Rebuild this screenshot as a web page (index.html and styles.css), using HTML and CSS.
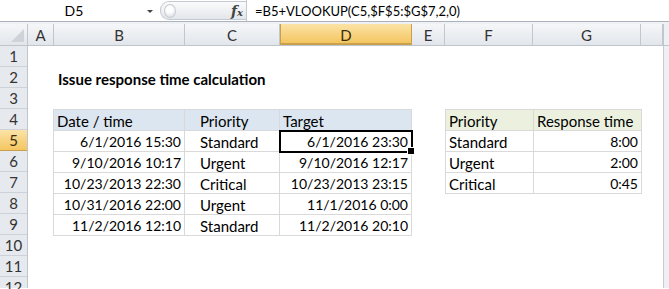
FILE: index.html
```html
<!DOCTYPE html>
<html lang="en">
<head>
    <meta charset="UTF-8">
    <title>Issue response time calculation</title>
    <link rel="stylesheet" href="styles.css">
</head>
<body>
    <div class="formula-bar">
        <div class="name-box">D5</div>
        <div class="name-drop"></div>
        <div class="fx-group">
            <span class="knob"></span>
            <span class="fx">f<i>x</i></span>
        </div>
        <div class="formula">=B5+VLOOKUP(C5,$F$5:$G$7,2,0)</div>
    </div>
    <div class="band"></div>

    <div class="col-heads">
        <div class="corner"></div>
        <div class="col-head w-a">A</div>
        <div class="col-head w-b">B</div>
        <div class="col-head w-c">C</div>
        <div class="col-head w-d selected">D</div>
        <div class="col-head w-e">E</div>
        <div class="col-head w-f">F</div>
        <div class="col-head w-g">G</div>
        <div class="col-head w-h"></div>
        <div class="scroll-cap"></div>
    </div>

    <div class="sheet-body">
        <div class="row-heads">
            <div class="row-head">1</div>
            <div class="row-head">2</div>
            <div class="row-head">3</div>
            <div class="row-head">4</div>
            <div class="row-head selected">5</div>
            <div class="row-head">6</div>
            <div class="row-head">7</div>
            <div class="row-head">8</div>
            <div class="row-head">9</div>
            <div class="row-head">10</div>
            <div class="row-head">11</div>
            <div class="row-head">12</div>
        </div>

        <div class="cells">
            <div class="blank-row"></div>
            <div class="title">Issue response time calculation</div>
            <div class="blank-row"></div>

            <div class="tables">
                <table class="data main">
                    <colgroup>
                        <col class="w-b"><col class="w-c"><col class="w-d">
                    </colgroup>
                    <tr class="head">
                        <td>Date / time</td><td class="indent">Priority</td><td>Target</td>
                    </tr>
                    <tr>
                        <td class="num">6/1/2016 15:30</td><td class="indent">Standard</td><td class="num active">6/1/2016 23:30</td>
                    </tr>
                    <tr>
                        <td class="num">9/10/2016 10:17</td><td class="indent">Urgent</td><td class="num">9/10/2016 12:17</td>
                    </tr>
                    <tr>
                        <td class="num">10/23/2013 22:30</td><td class="indent">Critical</td><td class="num">10/23/2013 23:15</td>
                    </tr>
                    <tr>
                        <td class="num">10/31/2016 22:00</td><td class="indent">Urgent</td><td class="num">11/1/2016 0:00</td>
                    </tr>
                    <tr>
                        <td class="num">11/2/2016 12:10</td><td class="indent">Standard</td><td class="num">11/2/2016 20:10</td>
                    </tr>
                </table>

                <table class="data lookup">
                    <colgroup>
                        <col class="w-f"><col class="w-g">
                    </colgroup>
                    <tr class="head">
                        <td>Priority</td><td>Response time</td>
                    </tr>
                    <tr><td>Standard</td><td class="num">8:00</td></tr>
                    <tr><td>Urgent</td><td class="num">2:00</td></tr>
                    <tr><td>Critical</td><td class="num">0:45</td></tr>
                </table>
            </div>
        </div>

        <div class="scroll"></div>
    </div>
</body>
</html>
```

FILE: styles.css
```css
* {
    margin: 0;
    padding: 0;
    box-sizing: border-box;
}
body {
    width: 669px;
    height: 289px;
    overflow: hidden;
    background: #fff;
    font-family: Lato, "Liberation Sans", sans-serif;
    font-size: 15px;
    color: #000;
}

/* formula bar */
.formula-bar {
    display: flex;
    height: 22px;
    border-bottom: 1px solid #aab2bd;
    background: #fff;
    font-size: 13px;
}
.name-box {
    width: 143px;
    text-align: center;
    line-height: 22px;
    padding-left: 5px;
    font-size: 14px;
}
.name-drop {
    width: 14px;
    position: relative;
}
.name-drop::before {
    content: "";
    position: absolute;
    left: 4px;
    top: 10px;
    border-left: 3px solid transparent;
    border-right: 3px solid transparent;
    border-top: 3px solid #444;
}
.fx-group {
    display: flex;
    align-items: center;
    justify-content: space-between;
    width: 86px;
    margin: 1px 0 1px 3px;
    padding: 0 3px 0 3px;
    border: 1px solid #c3c9d2;
    border-right: none;
    border-radius: 9px 0 0 9px;
    background: linear-gradient(#fbfbfc, #e3e6ea);
}
.knob {
    width: 12px;
    height: 14px;
    border-radius: 50%;
    background: radial-gradient(circle at 45% 35%, #fff 30%, #d2d7de 100%);
    border: 1px solid #c7ccd3;
}
.fx {
    font-family: "DejaVu Serif", "Liberation Serif", serif;
    font-style: italic;
    font-weight: bold;
    font-size: 14px;
    color: #444;
}
.fx i {
    font-size: 10px;
}
.formula {
    flex: 1;
    border-left: 1px solid #c3c9d2;
    line-height: 22px;
    padding-left: 8px;
}
.band {
    height: 2px;
    background: #eef0f3;
}

/* column headers */
.col-heads {
    display: flex;
    height: 22px;
    border-bottom: 1px solid #bfc5cd;
    background: linear-gradient(#f5f6f8, #e2e6eb);
    color: #333;
}
.corner {
    width: 28px;
    border-right: 1px solid #c2c7ce;
    position: relative;
}
.corner::after {
    content: "";
    position: absolute;
    right: 3px;
    bottom: 3px;
    border-left: 13px solid transparent;
    border-bottom: 13px solid #cfd3d9;
}
.col-head {
    border-right: 1px solid #c2c7ce;
    text-align: center;
    line-height: 22px;
}
.col-head.selected {
    background: linear-gradient(#fbe3a6, #f4c661);
    border-left: 1px solid #c9a04c;
    border-right: 1px solid #c9a04c;
    border-bottom: 2px solid #c9a04c;
    color: #3a2c0c;
}
.w-a { width: 26px; }
.w-b { width: 131px; }
.w-c { width: 95px; }
.w-d { width: 132px; }
.w-e { width: 33px; }
.w-f { width: 88px; }
.w-g { width: 108px; }
.w-h { width: 22px; }
.scroll-cap {
    flex: 1;
    background: #eef0f3;
    border-left: 1px solid #c2c7ce;
}

/* sheet body */
.sheet-body {
    display: flex;
    height: 242px;
}
.row-heads {
    width: 28px;
    flex-shrink: 0;
    background: #e6e9ee;
    border-right: 1px solid #bfc5cd;
    color: #333;
}
.row-head {
    height: 21px;
    border-bottom: 1px solid #cdd2d9;
    text-align: center;
    line-height: 21px;
}
.row-head.selected {
    background: linear-gradient(#fbe3a6, #f4c661);
    border-bottom-color: #c9a04c;
    color: #3a2c0c;
}
.cells {
    flex: 1;
}
.blank-row {
    height: 21px;
}
.title {
    height: 21px;
    line-height: 21px;
    padding: 2px 0 0 30px;
    font-weight: bold;
}
.scroll {
    width: 6px;
    background: #eef0f3;
    border-left: 1px solid #c8ccd2;
}

/* data tables */
.tables {
    display: flex;
    align-items: flex-start;
}
table.data {
    border-collapse: collapse;
    table-layout: fixed;
}
table.main {
    margin-left: 25px;
}
table.lookup {
    margin-left: 33px;
}
.data td {
    height: 20px;
    line-height: 18px;
    padding: 2px 3px 0;
    border: 1px solid #d9d9d9;
    white-space: nowrap;
    overflow: visible;
}
.data td.num {
    text-align: right;
    font-size: 14px;
}
.data td.indent {
    padding-left: 15px;
}
.main .head td {
    background: #dce6f1;
}
.lookup .head td {
    background: #ebf1de;
}
.data td.active {
    position: relative;
    outline: 2px solid #000;
    outline-offset: -1px;
}
.data td.active::after {
    content: "";
    position: absolute;
    right: -4px;
    bottom: -4px;
    width: 6px;
    height: 6px;
    background: #000;
    border: 1px solid #fff;
}
```
